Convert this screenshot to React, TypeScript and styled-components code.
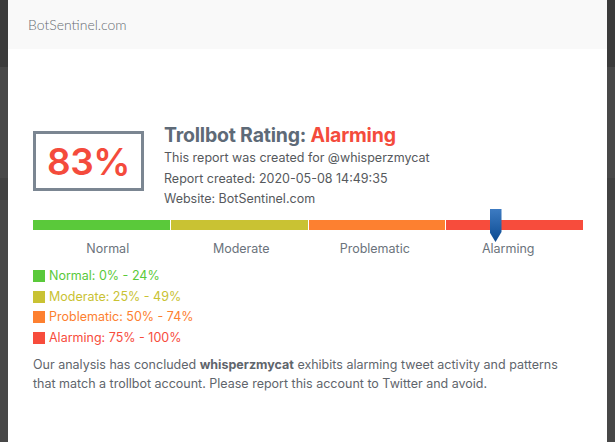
import styled, { createGlobalStyle } from "styled-components";

const GlobalStyle = createGlobalStyle`
  html, body {
    margin: 0;
    padding: 0;
    height: 100%;
  }
  body {
    overflow: hidden;
    background: linear-gradient(
      to bottom,
      #3b3b3b 0px, #3b3b3b 67px,
      #484848 67px, #484848 178px,
      #414141 178px, #414141 200px,
      #474747 200px
    );
    font-family: Inter, "Noto Sans", sans-serif;
  }
`

const Backdrop = styled.div`
  height: 442px;
  padding-left: 8px;
`

const Modal = styled.div`
  width: 599px;
  height: 100%;
  background: #ffffff;
`

const Header = styled.div`
  height: 49px;
  background: #f9f9f9;
  display: flex;
  align-items: center;
  padding-left: 20px;
  font-family: Lato, sans-serif;
  font-weight: 300;
  font-size: 14px;
  color: #666c72;
`

const Body = styled.div`
  padding: 73px 24px 0 25px;
`

const Summary = styled.div`
  display: flex;
  align-items: flex-start;
  gap: 20px;
`

const ScoreBox = styled.div`
  box-sizing: border-box;
  margin-top: 9px;
  width: 111px;
  height: 60px;
  border: 3px solid #7b8692;
  display: flex;
  align-items: center;
  justify-content: center;
  font-size: 37px;
  font-weight: 600;
  color: #f44b3c;
  letter-spacing: -0.5px;
`

const Info = styled.div`
  display: flex;
  flex-direction: column;
`

const Title = styled.h2`
  margin: 0;
  font-size: 19.5px;
  line-height: 26px;
  font-weight: 700;
  color: #5e6a77;
  letter-spacing: -0.2px;
`

const Rating = styled.span`
  color: #f44b3c;
`

const InfoLine = styled.div`
  font-size: 12.5px;
  line-height: 20.5px;
  color: #56595d;
`

const Scale = styled.div`
  position: relative;
  margin-top: 10.5px;
  display: grid;
  grid-template-columns: repeat(4, 1fr);
  gap: 1px;
  height: 10px;
`

const Segment = styled.div<{ $color: string }>`
  background: ${(p) => p.$color};
`

const Marker = styled.div`
  position: absolute;
  top: -11px;
  width: 12px;
  height: 33px;
  background: linear-gradient(to bottom, #3d7bc2, #0b4a91);
  clip-path: polygon(0 0, 100% 0, 100% 70%, 50% 100%, 0 70%);
`

const Labels = styled.div`
  margin-top: 9px;
  padding: 0 8px;
  display: grid;
  grid-template-columns: repeat(4, 1fr);
`

const Label = styled.div`
  text-align: center;
  font-size: 12.5px;
  line-height: 20px;
  color: #6b737c;
`

const Legend = styled.div`
  margin-top: 7px;
  display: flex;
  flex-direction: column;
`

const LegendRow = styled.div<{ $color: string }>`
  display: flex;
  align-items: center;
  gap: 4px;
  font-size: 12.5px;
  line-height: 20.5px;
  color: ${(p) => p.$color};
`

const Swatch = styled.span<{ $color: string }>`
  width: 12px;
  height: 12px;
  background: ${(p) => p.$color};
`

const Conclusion = styled.p`
  margin: 8px 0 0;
  font-size: 12.5px;
  line-height: 18.5px;
  color: #5f656c;
`

const levels = [
  { name: "Normal", range: "0% - 24%", color: "#5ac93a" },
  { name: "Moderate", range: "25% - 49%", color: "#c9c233" },
  { name: "Problematic", range: "50% - 74%", color: "#fd8030" },
  { name: "Alarming", range: "75% - 100%", color: "#f74c3c" },
];

const score = 83;

const App = () => {
  return (
    <>
      <GlobalStyle />
      <Backdrop>
        <Modal>
          <Header>BotSentinel.com</Header>
          <Body>
            <Summary>
              <ScoreBox>{score}%</ScoreBox>
              <Info>
                <Title>
                  Trollbot Rating: <Rating>Alarming</Rating>
                </Title>
                <InfoLine>This report was created for @whisperzmycat</InfoLine>
                <InfoLine>Report created: 2020-05-08 14:49:35</InfoLine>
                <InfoLine>Website: BotSentinel.com</InfoLine>
              </Info>
            </Summary>

            <Scale>
              {levels.map((l) => (
                <Segment key={l.name} $color={l.color} />
              ))}
              <Marker style={{ left: `${score}%` }} />
            </Scale>
            <Labels>
              {levels.map((l) => (
                <Label key={l.name}>{l.name}</Label>
              ))}
            </Labels>

            <Legend>
              {levels.map((l) => (
                <LegendRow key={l.name} $color={l.color}>
                  <Swatch $color={l.color} />
                  {l.name}: {l.range}
                </LegendRow>
              ))}
            </Legend>

            <Conclusion>
              Our analysis has concluded <b>whisperzmycat</b> exhibits alarming tweet activity and patterns
              that match a trollbot account. Please report this account to Twitter and avoid.
            </Conclusion>
          </Body>
        </Modal>
      </Backdrop>
    </>
  );
}

export default App;
